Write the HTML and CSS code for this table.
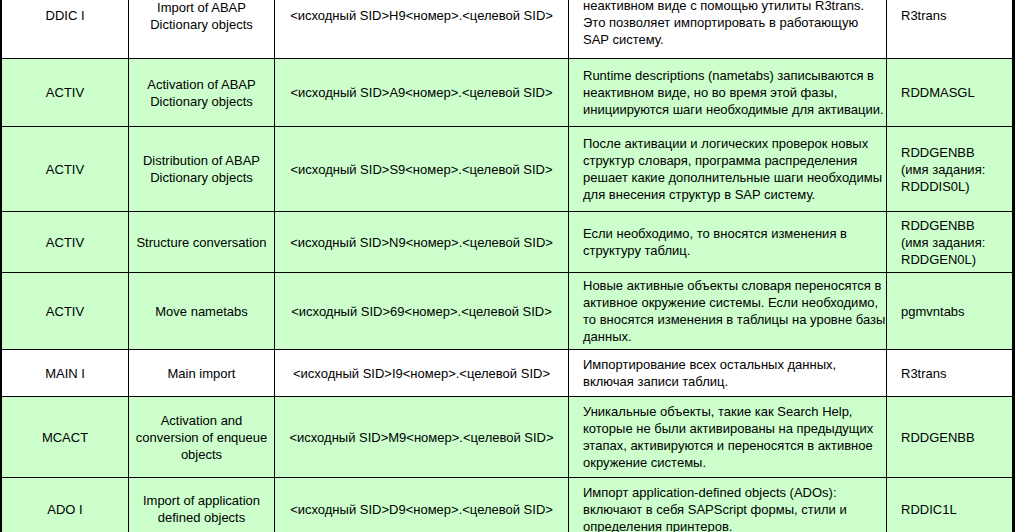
FILE: index.html
```html
<!DOCTYPE html>
<html lang="ru">
<head>
<meta charset="utf-8">
<title>Фазы импорта</title>
<link rel="stylesheet" href="styles.css">
</head>
<body>
<div class="sheet">
  <div class="row white h86">
    <div class="cell c">DDIC I</div>
    <div class="cell c">Import of ABAP<br>Dictionary objects</div>
    <div class="cell c">&lt;исходный SID&gt;H9&lt;номер&gt;.&lt;целевой SID&gt;</div>
    <div class="cell l bottom">неактивном виде с помощью утилиты R3trans.<br>Это позволяет импортировать в работающую<br>SAP систему.</div>
    <div class="cell l">R3trans</div>
  </div>
  <div class="row green h68">
    <div class="cell c">ACTIV</div>
    <div class="cell c">Activation of ABAP<br>Dictionary objects</div>
    <div class="cell c">&lt;исходный SID&gt;A9&lt;номер&gt;.&lt;целевой SID&gt;</div>
    <div class="cell l">Runtime descriptions (nametabs) записываются в<br>неактивном виде, но во время этой фазы,<br>инициируются шаги необходимые для активации.</div>
    <div class="cell l">RDDMASGL</div>
  </div>
  <div class="row green h85">
    <div class="cell c">ACTIV</div>
    <div class="cell c">Distribution of ABAP<br>Dictionary objects</div>
    <div class="cell c">&lt;исходный SID&gt;S9&lt;номер&gt;.&lt;целевой SID&gt;</div>
    <div class="cell l">После активации и логических проверок новых<br>структур словаря, программа распределения<br>решает какие дополнительные шаги необходимы<br>для внесения структур в SAP систему.</div>
    <div class="cell l">RDDGENBB<br>(имя задания:<br>RDDDIS0L)</div>
  </div>
  <div class="row green h61">
    <div class="cell c">ACTIV</div>
    <div class="cell c">Structure conversation</div>
    <div class="cell c">&lt;исходный SID&gt;N9&lt;номер&gt;.&lt;целевой SID&gt;</div>
    <div class="cell l">Если необходимо, то вносятся изменения в<br>структуру таблиц.</div>
    <div class="cell l">RDDGENBB<br>(имя задания:<br>RDDGEN0L)</div>
  </div>
  <div class="row green h77">
    <div class="cell c">ACTIV</div>
    <div class="cell c">Move nametabs</div>
    <div class="cell c">&lt;исходный SID&gt;69&lt;номер&gt;.&lt;целевой SID&gt;</div>
    <div class="cell l">Новые активные объекты словаря переносятся в<br>активное окружение системы. Если необходимо,<br>то вносятся изменения в таблицы на уровне базы<br>данных.</div>
    <div class="cell l">pgmvntabs</div>
  </div>
  <div class="row white h47">
    <div class="cell c">MAIN I</div>
    <div class="cell c">Main import</div>
    <div class="cell c">&lt;исходный SID&gt;I9&lt;номер&gt;.&lt;целевой SID&gt;</div>
    <div class="cell l">Импортирование всех остальных данных,<br>включая записи таблиц.</div>
    <div class="cell l">R3trans</div>
  </div>
  <div class="row green h81">
    <div class="cell c">MCACT</div>
    <div class="cell c">Activation and<br>conversion of enqueue<br>objects</div>
    <div class="cell c">&lt;исходный SID&gt;M9&lt;номер&gt;.&lt;целевой SID&gt;</div>
    <div class="cell l">Уникальные объекты, такие как Search Help,<br>которые не были активированы на предыдущих<br>этапах, активируются и переносятся в активное<br>окружение системы.</div>
    <div class="cell l">RDDGENBB</div>
  </div>
  <div class="row green h63">
    <div class="cell c">ADO I</div>
    <div class="cell c">Import of application<br>defined objects</div>
    <div class="cell c">&lt;исходный SID&gt;D9&lt;номер&gt;.&lt;целевой SID&gt;</div>
    <div class="cell l">Импорт application-defined objects (ADOs):<br>включают в себя SAPScript формы, стили и<br>определения принтеров.</div>
    <div class="cell l">RDDIC1L</div>
  </div>
</div>
</body>
</html>
```

FILE: styles.css
```css
html, body {
  margin: 0;
  padding: 0;
  background: #ffffff;
  overflow: hidden;
}

.sheet {
  width: 1015px;
  box-sizing: border-box;
  margin-top: -27px;
  border-left: 2px solid #000;
  border-right: 3px solid #000;
  font-family: "Liberation Sans", Arial, sans-serif;
  font-size: 13px;
  line-height: 17px;
  color: #000;
}

.row {
  display: grid;
  grid-template-columns: 127px 146px 294px 318px 125px;
  box-sizing: border-box;
  border-bottom: 1px solid #000;
}

.white { background: #ffffff; }
.green { background: #ccffcc; }

.h86 { height: 86px; }
.h68 { height: 68px; }
.h85 { height: 85px; }
.h61 { height: 61px; }
.h77 { height: 77px; }
.h47 { height: 47px; }
.h81 { height: 81px; }
.h63 { height: 63px; }

.cell {
  display: flex;
  align-items: center;
  border-right: 1px solid #000;
  white-space: nowrap;
  overflow: hidden;
}

.cell:last-child {
  border-right: 0;
}

.c {
  justify-content: center;
  text-align: center;
}

.l {
  padding-left: 14px;
  text-align: left;
}

.bottom {
  align-items: flex-end;
  padding-bottom: 10px;
}
```
